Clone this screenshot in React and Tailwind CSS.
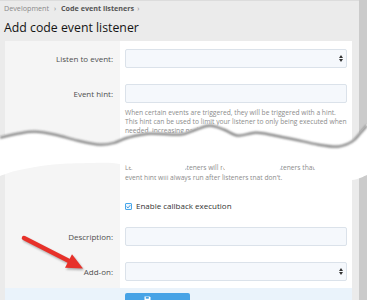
import React from "react";

const Input = ({ select }) => (
  <div className="h-[19px] rounded-[2px] border border-[#dbe2ea] bg-[#f5f8fc] flex items-center justify-end pr-[3px]">
    {select && (
      <svg width="4" height="7" viewBox="0 0 4 7">
        <path d="M0 3 L2 0 L4 3Z M0 4 L2 7 L4 4Z" fill="#333" />
      </svg>
    )}
  </div>
);

const Label = ({ children }) => (
  <div className="h-[19px] flex items-center justify-end pr-[7px] text-[8px] text-[#4f4f4f] whitespace-nowrap">
    {children}
  </div>
);

function smooth(pts, start) {
  let d = start ? `M${pts[0][0]},${pts[0][1]}` : `L${pts[0][0]},${pts[0][1]}`;
  for (let i = 0; i < pts.length - 1; i++) {
    const p0 = pts[i - 1] || pts[i];
    const p1 = pts[i];
    const p2 = pts[i + 1];
    const p3 = pts[i + 2] || p2;
    const c1 = [p1[0] + (p2[0] - p0[0]) / 6, p1[1] + (p2[1] - p0[1]) / 6];
    const c2 = [p2[0] - (p3[0] - p1[0]) / 6, p2[1] - (p3[1] - p1[1]) / 6];
    d += ` C${c1[0].toFixed(1)},${c1[1].toFixed(1)} ${c2[0].toFixed(1)},${c2[1].toFixed(1)} ${p2[0]},${p2[1]}`;
  }
  return d;
}

const TOP = [
  [0, 136], [18, 132], [35, 130], [55, 133], [78, 139], [100, 143], [115, 141],
  [128, 136], [150, 132], [180, 133], [196, 128], [210, 124], [224, 128],
  [238, 134], [256, 131], [275, 134], [295, 138], [318, 143], [338, 145],
  [352, 140], [360, 132], [367, 124],
];
const BOTTOM = [
  [367, 175], [352, 180], [332, 176], [318, 170], [306, 162], [292, 161],
  [283, 164], [276, 173], [252, 176], [230, 174], [222, 166], [212, 161],
  [196, 161], [188, 165], [180, 174], [152, 176], [136, 172], [128, 166],
  [112, 163], [90, 163], [60, 164], [35, 167], [15, 171], [0, 176],
];

const Tear = () => {
  const top = smooth(TOP, true);
  const bottom = smooth(BOTTOM, false);
  return (
    <svg
      className="absolute left-0 top-0 pointer-events-none"
      width="367"
      height="300"
      viewBox="0 0 367 300"
    >
      <defs>
        <filter id="blur1" x="-5%" y="-50%" width="110%" height="200%">
          <feGaussianBlur stdDeviation="0.9" />
        </filter>
        <filter id="ash" x="-20%" y="-20%" width="140%" height="140%">
          <feGaussianBlur stdDeviation="1.2" />
        </filter>
      </defs>
      <path d={top + " " + bottom + " Z"} fill="#ffffff" />
      <path
        d={top}
        fill="none"
        stroke="#7d7d7d"
        strokeWidth="2.2"
        transform="translate(0,1.6)"
        filter="url(#blur1)"
      />
      <g filter="url(#ash)" opacity="0.45" transform="translate(1.2,1.8)">
        <line x1="24" y1="238" x2="70" y2="261.5" stroke="#555" strokeWidth="4.5" strokeLinecap="round" />
        <polygon points="83,268.5 65,267.8 72,254.2" fill="#555" />
      </g>
      <line x1="24" y1="238" x2="70" y2="261.5" stroke="#e7312a" strokeWidth="4.5" strokeLinecap="round" />
      <polygon points="83,268.5 65,267.8 72,254.2" fill="#e7312a" />
    </svg>
  );
};

export default function App() {
  return (
    <div className="relative w-[367px] h-[300px] overflow-hidden bg-white font-['Open_Sans',sans-serif]">
      {/* top piece */}
      <div className="h-[150px] overflow-hidden flex">
        <div className="w-[359px] bg-[#ebebeb] border-t border-[#dcdcdc]">
          <div className="pl-[4px] pt-[2px] leading-[10px] text-[7.2px] text-[#8a8a8a] whitespace-nowrap">
            Development <span className="mx-[3px]">›</span>{" "}
            <span className="font-bold text-[#555]">Code event listeners</span>
            <span className="mx-[3px]">›</span>
          </div>
          <div className="pl-[4px] mt-[5px] leading-[20px] text-[12.3px] text-[#141414] whitespace-nowrap">
            Add code event listener
          </div>
          <div className="ml-[5px] mt-[3px] w-[347px] bg-white">
            <div className="grid grid-cols-[115px_1fr]">
              <div className="bg-[#f5f5f5] pt-[8px] pb-[8px]">
                <Label>Listen to event:</Label>
              </div>
              <div className="pl-[5px] pr-[5px] pt-[8px] pb-[8px]">
                <Input select />
              </div>
            </div>
            <div className="grid grid-cols-[115px_1fr]">
              <div className="bg-[#f5f5f5] pt-[8px] h-[80px]">
                <Label>Event hint:</Label>
              </div>
              <div className="pl-[5px] pr-[5px] pt-[8px]">
                <Input />
                <div className="mt-[5px] text-[6.7px] leading-[9px] text-[#8c8c8c] whitespace-nowrap">
                  When certain events are triggered, they will be triggered with a hint.
                  <br />
                  This hint can be used to limit your listener to only being executed when
                  <br />
                  needed, increasing performance.
                </div>
              </div>
            </div>
          </div>
        </div>
        <div className="w-[8px] bg-[#cbcbcb]" />
      </div>

      {/* bottom piece */}
      <div className="h-[150px] overflow-hidden flex">
        <div className="w-[359px] bg-[#ebebeb]">
          <div className="ml-[5px] w-[347px] bg-white">
            <div className="grid grid-cols-[115px_1fr]">
              <div className="bg-[#f5f5f5]" />
              <div className="pl-[5px] pr-[5px] pt-[13px] pb-[7px]">
                <div className="text-[6.7px] leading-[10px] text-[#8c8c8c] whitespace-nowrap">
                  Leave empty and listeners will run for any hint. Listeners that
                  <br />
                  event hint will always run after listeners that don't.
                </div>
                <div className="mt-[17px] h-[12px] flex items-center gap-[4px] text-[8px] text-[#333] whitespace-nowrap">
                  <span className="w-[7px] h-[7px] border border-[#47a7eb] rounded-[1px] bg-[#eef6fd] flex items-center justify-center">
                    <svg width="5" height="5" viewBox="0 0 5 5">
                      <path d="M0.6 2.6 L2 3.9 L4.4 1.1" fill="none" stroke="#2f8fd8" strokeWidth="0.9" />
                    </svg>
                  </span>
                  Enable callback execution
                </div>
              </div>
            </div>
            <div className="grid grid-cols-[115px_1fr]">
              <div className="bg-[#f5f5f5] pt-[8px] pb-[8px]">
                <Label>Description:</Label>
              </div>
              <div className="pl-[5px] pr-[5px] pt-[8px] pb-[8px]">
                <Input />
              </div>
            </div>
            <div className="grid grid-cols-[115px_1fr]">
              <div className="bg-[#f5f5f5] pt-[8px] pb-[7px]">
                <Label>Add-on:</Label>
              </div>
              <div className="pl-[5px] pr-[5px] pt-[8px] pb-[7px]">
                <Input select />
              </div>
            </div>
            <div className="h-[20px] bg-[#eaf3fb] pl-[120px] pt-[5px]">
              <div className="w-[65px] h-[18px] rounded-[2px] bg-[#47a3e6] flex items-start justify-center gap-[3px] pt-[3px] text-[8px] text-white">
                <svg width="7" height="7" viewBox="0 0 7 7">
                  <path d="M0.5 0.5 H5.5 L6.5 1.5 V6.5 H0.5 Z" fill="#fff" />
                  <rect x="1.8" y="0.9" width="3" height="1.8" fill="#47a3e6" />
                </svg>
                Save
              </div>
            </div>
          </div>
        </div>
        <div className="w-[8px] bg-[#cbcbcb]" />
      </div>

      <Tear />
    </div>
  );
}
